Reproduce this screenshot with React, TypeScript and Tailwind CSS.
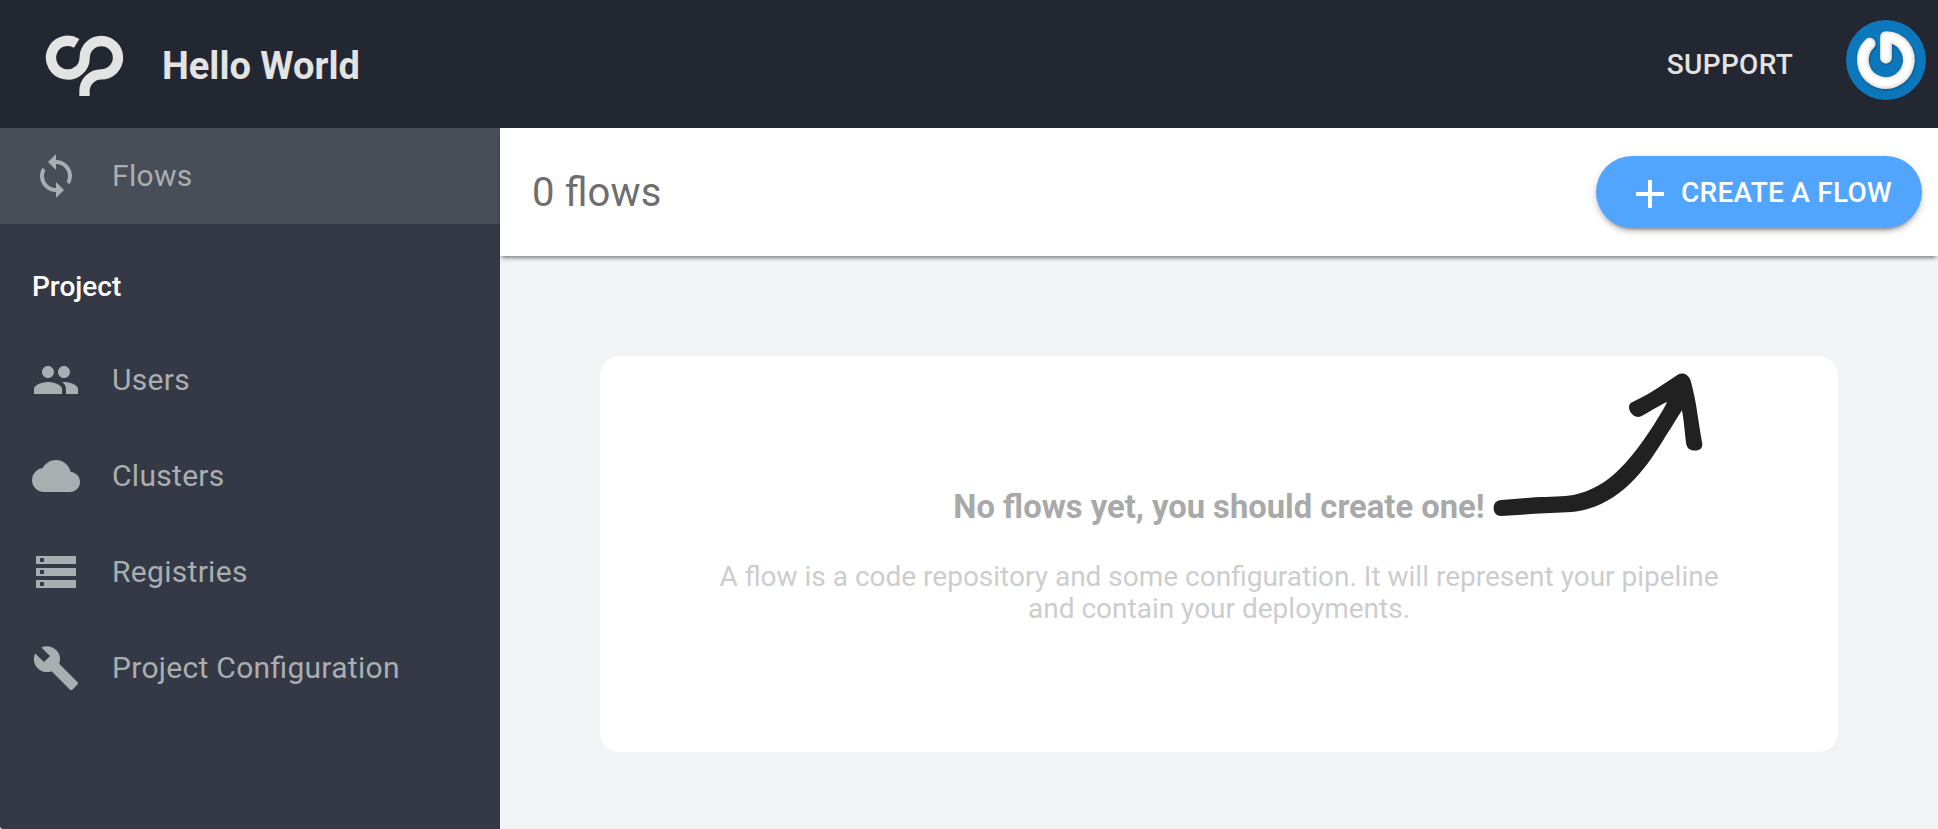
import { MdAdd, MdBuild, MdCloud, MdPeople, MdStorage, MdSync } from "react-icons/md";

const projectItems = [
  { label: "Users", Icon: MdPeople },
  { label: "Clusters", Icon: MdCloud },
  { label: "Registries", Icon: MdStorage },
  { label: "Project Configuration", Icon: MdBuild },
];

function Logo() {
  return (
    <svg viewBox="135 102 240 189" className="mt-[3px] h-[63px] w-20" fill="none" stroke="#e3e3e3" strokeWidth="31">
      <path d="M230 130A50.500 50.500 0 1 0 254 172.500A50 50 0 1 1 304 223A50.500 50.500 0 0 0 253.500 273.500V288" />
    </svg>
  );
}

function Avatar() {
  return (
    <svg viewBox="0 0 240 240" className="mb-2 size-20 rounded-full bg-[#0c77ba]">
      <defs>
        <filter id="tubeShadow" x="-20%" y="-20%" width="140%" height="140%">
          <feDropShadow dx="2" dy="3" stdDeviation="3" floodColor="#03305a" floodOpacity="0.55" />
        </filter>
        <filter id="soften" x="-10%" y="-10%" width="120%" height="120%">
          <feGaussianBlur stdDeviation="3.500" />
        </filter>
      </defs>
      <g fill="none" strokeLinecap="round" strokeLinejoin="round">
        <path filter="url(#tubeShadow)" stroke="#e4e2df" strokeWidth="35" d="M71 71A69 69 0 1 0 120 51V113" />
        <path filter="url(#soften)" stroke="#ffffff" strokeWidth="24" d="M70 70A69 69 0 1 0 119 50V111" />
      </g>
    </svg>
  );
}

function Arrow() {
  return (
    <svg viewBox="96 60 636 444" className="absolute top-[14px] left-[892px] h-[148px] w-[212px]" fill="#212121">
      <path d="M124 450C160 447 195 444 225 442C270 440 310 440 340 435C395 424 440 396 475 361C530 308 575 236 605 186C612 174 618 163 621 155C595 168 570 184 545 198C532 204 522 200 514 190C506 179 504 166 513 158C535 147 560 135 580 122C605 106 630 90 652 75C662 69 673 69 681 76C688 82 691 88 693 96C702 130 708 160 712 190C717 222 722 255 727 282C727 292 723 298 715 300C706 303 696 302 689 298C682 294 679 286 678 278C674 246 672 212 666 181C650 206 628 242 610 270C580 318 550 364 505 406C465 443 420 469 372 480C345 487 300 488 255 490C210 492 165 496 124 498C109 498 101 488 101 474C101 460 109 451 124 450Z" />
    </svg>
  );
}

export default function App() {
  return (
    <div className="flex h-[829px] flex-col bg-white font-['Roboto',sans-serif]">
      <header className="flex h-32 shrink-0 items-center bg-[#232731] pr-3 pl-[45px] text-[#e3e3e3]">
        <Logo />
        <h1 className="mt-[3px] ml-[37px] text-[38px] leading-none font-bold">Hello World</h1>
        <a className="mt-0.5 mr-[53px] ml-auto text-[28px] font-medium tracking-[0.3px]">SUPPORT</a>
        <Avatar />
      </header>
      <div className="flex min-h-0 flex-1">
        <nav className="w-[500px] shrink-0 rounded-bl-[3px] bg-[#353945] text-[30px] tracking-[0.3px] text-[#a9aeb1] [font-feature-settings:'liga']">
          <a className="flex h-24 items-center gap-8 bg-[#494d57] pl-8">
            <MdSync className="size-12" />
            <span className="-mt-px">Flows</span>
          </a>
          <h2 className="flex h-[108px] items-center pt-[18px] pl-8 text-[28px] font-medium tracking-normal text-white">Project</h2>
          {projectItems.map(({ label, Icon }) => (
            <a key={label} className="flex h-24 items-center gap-8 pl-8">
              <Icon className="size-12" />
              <span className="-mt-px">{label}</span>
            </a>
          ))}
        </nav>
        <main className="flex min-w-0 flex-1 flex-col bg-[#f2f3f5]">
          <div className="flex h-32 shrink-0 items-center justify-between bg-white pr-4 pl-8 shadow-[0_4px_4px_-2px_rgba(0,0,0,0.42),0_2px_6px_-2px_rgba(0,0,0,0.15)]">
            <h2 className="mt-0.5 text-[40px] tracking-[0.15px] text-[#6e6e6e] [font-feature-settings:'liga']">0 flows</h2>
            <button className="flex h-[72px] w-[326px] items-center rounded-full bg-[#52a5ff] pl-[30px] text-[28px] font-medium tracking-[0.27px] text-white shadow-[0_6px_2px_-4px_rgba(0,0,0,0.2),0_4px_4px_0_rgba(0,0,0,0.14),0_2px_10px_0_rgba(0,0,0,0.12)]">
              <MdAdd className="mt-[3px] mr-[7px] size-12" />
              <span className="mt-0.5">CREATE A FLOW</span>
            </button>
          </div>
          <section className="relative mx-[100px] mt-[100px] h-[396px] rounded-[20px] bg-white pt-[132px] text-center">
            <h3 className="text-[32.76px] leading-[38px] font-bold text-[#a9a9a9]">No flows yet, you should create one!</h3>
            <p className="mx-auto mt-[35px] w-[1038px] text-[28px] leading-8 text-[#cdcdcd]">
              A flow is a code repository and some configuration. It will represent your pipeline and contain your deployments.
            </p>
            <Arrow />
          </section>
        </main>
      </div>
    </div>
  );
}
